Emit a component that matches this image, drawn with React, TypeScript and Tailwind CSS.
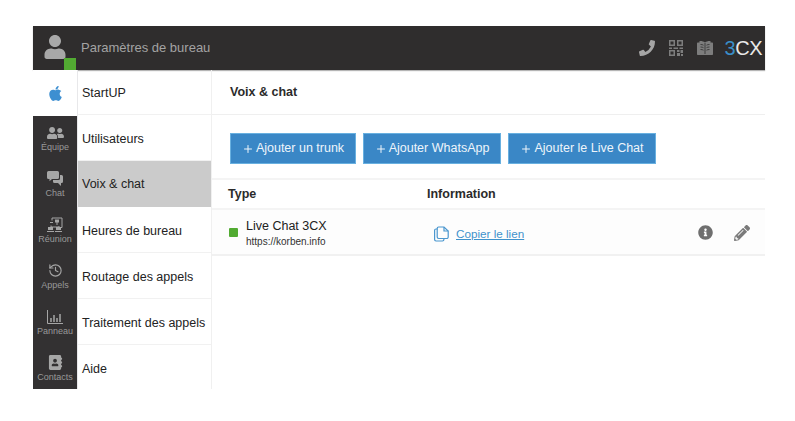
import { Plus, History } from 'lucide-react';
import { FaApple, FaUserFriends, FaAddressBook, FaPhoneAlt, FaInfoCircle, FaPencilAlt, FaUser } from 'react-icons/fa';
import type { ReactNode } from 'react';

function ChatIcon() {
  return (
    <svg viewBox="0 0 16 15" className="h-[15px] w-[16px]" fill="currentColor">
      <path d="M1.5 0h9A1.5 1.5 0 0 1 12 1.5v5A1.5 1.5 0 0 1 10.5 8H5l-2.5 2.2V8h-1A1.5 1.5 0 0 1 0 6.5v-5A1.5 1.5 0 0 1 1.5 0z" />
      <path d="M13 4h1.5A1.5 1.5 0 0 1 16 5.5v5a1.5 1.5 0 0 1-1.5 1.5H14v3l-3-3H7.500A1.500 1.500 0 0 1 6 10.500V9h5.500A1.500 1.500 0 0 0 13 7.500z" />
    </svg>
  );
}

function MeetingIcon() {
  return (
    <svg viewBox="0 0 16 16" className="h-[16px] w-[16px]" fill="none" stroke="currentColor" strokeWidth="1">
      <path d="M5 3.500V1h10v9.500h-2M3 5.500h3M10 5v3M4 8.500v1.500h8V9" />
      <rect x="8" y="2.500" width="4" height="3" fill="currentColor" stroke="none" />
      <rect x="1" y="10" width="5" height="3" fill="currentColor" stroke="none" />
      <rect x="9" y="10" width="5" height="3" fill="currentColor" stroke="none" />
      <path d="M0 14.500h7M8 14.500h7" />
    </svg>
  );
}

function PanelIcon() {
  return (
    <svg viewBox="0 0 16 14" className="h-[14px] w-[16px]" fill="none" stroke="currentColor">
      <path d="M.5 0v13.500H16" />
      <path d="M4 12V8M7 12V5M10 12V8M13 12V4" strokeWidth="1.500" />
    </svg>
  );
}

function QrIcon() {
  return (
    <svg viewBox="0 0 14 16" className="h-[16px] w-[14px]" fill="currentColor">
      <path d="M0 0h6v6H0zM1.500 1.500v3h3v-3zM8 0h6v6H8zM9.500 1.500v3h3v-3z" fillRule="evenodd" />
      <path d="M0 7.500h3V9H0zM4.500 7.500H9V9H4.500zM10.500 7.500H14V9h-3.500z" />
      <path d="M0 10h6v6H0zM1.500 11.500v3h3v-3z" fillRule="evenodd" />
      <path d="M8 10h2.500v2H8zM11.500 10H14v3h-2.500zM8 13h3v3H8zM12 14h2v2h-2z" />
    </svg>
  );
}

function BookIcon() {
  return (
    <svg viewBox="0 0 16 16" className="h-[16px] w-[16px]" fill="currentColor">
      <path d="M2.500 1C4.500.8 6.800 1.300 8 2.500 9.200 1.300 11.500.8 13.500 1v1.500H15c.6 0 1 .4 1 1V14c0 .6-.4 1-1 1H1c-.6 0-1-.4-1-1V3.500c0-.6.4-1 1-1h1.500z" />
      <path d="M8 3v11M3.500 4.500c1.200 0 2.300.2 3 .7M3.500 7c1.200 0 2.300.2 3 .7M3.500 9.500c1.200 0 2.300.2 3 .7M12.500 4.500c-1.200 0-2.300.2-3 .7M12.500 7c-1.200 0-2.300.2-3 .7M12.500 9.500c-1.200 0-2.300.2-3 .7" stroke="#2f2d2d" strokeWidth=".8" fill="none" />
    </svg>
  );
}

function CopyIcon() {
  return (
    <svg viewBox="0 0 15 16" className="h-[16px] w-[15px] text-[#4b97cf]" fill="none" stroke="currentColor" strokeWidth="1.200">
      <path d="M3.500 3H2a1.400 1.400 0 0 0-1.400 1.400v9.200A1.400 1.400 0 0 0 2 15h6.500a1.400 1.400 0 0 0 1.400-1.400V12.500" />
      <path d="M4.600 1H10l4.200 4v6.100a1.400 1.400 0 0 1-1.400 1.400H4.600a1.400 1.400 0 0 1-1.400-1.400V2.400A1.400 1.400 0 0 1 4.600 1z" />
      <path d="M10 1v4h4.200" />
    </svg>
  );
}

const rail: { label: string; icon: ReactNode }[] = [
  { label: 'Équipe', icon: <FaUserFriends className="h-[14px] w-[17px]" /> },
  { label: 'Chat', icon: <ChatIcon /> },
  { label: 'Réunion', icon: <MeetingIcon /> },
  { label: 'Appels', icon: <History className="h-[15px] w-[15px]" strokeWidth={1.8} /> },
  { label: 'Panneau', icon: <PanelIcon /> },
  { label: 'Contacts', icon: <FaAddressBook className="h-[15px] w-[15px]" /> },
];

const menu = [
  'StartUP',
  'Utilisateurs',
  'Voix & chat',
  'Heures de bureau',
  'Routage des appels',
  'Traitement des appels',
  'Aide',
];

const buttons = [
  { label: 'Ajouter un trunk', width: 'w-[126px]' },
  { label: 'Ajouter WhatsApp', width: 'w-[138px]' },
  { label: 'Ajouter le Live Chat', width: 'w-[148px]' },
];

export default function App() {
  return (
    <div className="h-[421px] w-[795px] overflow-hidden bg-white pl-[33px] pt-[26px] font-['Liberation_Sans',Arial,sans-serif]">
      <div className="flex h-[363px] w-[732px] flex-col">
        <header className="flex h-[44px] shrink-0 items-center bg-[#2f2d2d] shadow-[0_1px_1px_#b5b5b5]">
          <div className="relative flex h-[44px] w-[44px] items-center justify-center">
            <FaUser className="mb-[3px] h-[24px] w-[22px] text-[#a8a8a8]" />
            <span className="absolute bottom-0 right-[1px] h-[12px] w-[12px] bg-[#52ab32]" />
          </div>
          <span className="ml-[4px] text-[13px] text-[#a3a3a3]">Paramètres de bureau</span>
          <div className="ml-auto flex items-center pr-[3px]">
            <FaPhoneAlt className="h-[16px] w-[16px] -scale-x-100 text-[#a5a5a5]" />
            <span className="ml-[14px] text-[#7d7d7d]">
              <QrIcon />
            </span>
            <span className="ml-[14px] text-[#7d7d7d]">
              <BookIcon />
            </span>
            <span className="ml-[12px] text-[20px] leading-none tracking-[-0.5px] text-[#e8e8e8]">
              <span className="text-[#3a8fc9]">3</span>CX
            </span>
          </div>
        </header>

        <div className="flex min-h-0 flex-1">
          <nav className="w-[44px] shrink-0 overflow-hidden bg-[#333132]">
            <div className="flex h-[46px] items-center justify-center bg-white">
              <FaApple className="h-[17px] w-[17px] text-[#3d8fd1]" />
            </div>
            {rail.map((item) => (
              <div key={item.label} className="flex h-[46px] flex-col items-center justify-center pb-[2px] text-[#a6a6a6]">
                <span className="flex h-[16px] items-center">{item.icon}</span>
                <span className="mt-[1px] text-[9px] leading-[10px] text-[#999]">{item.label}</span>
              </div>
            ))}
          </nav>

          <aside className="w-[135px] shrink-0 overflow-hidden border-l border-r border-l-[#e8e8ea] border-r-[#f0f0f0]">
            {menu.map((item, i) => (
              <div
                key={item}
                className={
                  (i === 0 ? 'h-[45px] ' : 'h-[46px] ') +
                  (item === 'Voix & chat'
                    ? 'flex items-center bg-[#cbcbcb] pl-[4px] pt-[1px] text-[12.5px] text-[#222]'
                    : 'flex items-center border-b border-[#f1f1f1] pl-[4px] pt-[3px] text-[12.5px] text-[#222]')
                }
              >
                {item}
              </div>
            ))}
          </aside>

          <main className="min-w-0 flex-1">
            <div className="flex h-[45px] items-center border-b border-[#efefef] pl-[18px] text-[12.5px] font-bold text-[#2b2b2b]">
              Voix &amp; chat
            </div>
            <div className="flex gap-[7px] pl-[18px] pt-[18px]">
              {buttons.map((b) => (
                <button
                  key={b.label}
                  type="button"
                  className={`flex h-[31px] items-center justify-center gap-[2px] border border-[#68b0e0] bg-[#3a87c6] text-[12.5px] text-[#eef5fb] ${b.width}`}
                >
                  <Plus className="h-[12px] w-[12px]" strokeWidth={2} />
                  {b.label}
                </button>
              ))}
            </div>
            <div className="mt-[14px] flex h-[32px] items-center border-y-2 border-[#f4f4f4] pl-[16px] text-[12.5px] font-bold text-[#2b2b2b]">
              <span className="w-[199px]">Type</span>
              <span>Information</span>
            </div>
            <div className="flex h-[46px] items-center border-b-2 border-[#f1f1f1] bg-[#fdfdfd] pl-[17px]">
              <span className="h-[9px] w-[9px] rounded-[1px] bg-[#52ab32]" />
              <div className="ml-[8px] w-[188px] pt-[3px]">
                <div className="text-[12.5px] leading-[15px] text-[#222]">Live Chat 3CX</div>
                <div className="text-[10px] leading-[15px] text-[#333]">https://korben.info</div>
              </div>
              <span className="pt-[3px]">
                <CopyIcon />
              </span>
              <span className="ml-[7px] pt-[3px] text-[11.7px] text-[#3f92cc] underline">Copier le lien</span>
              <div className="ml-auto flex items-center pr-[15px] pt-[1px] text-[#6f6f6f]">
                <FaInfoCircle className="h-[15px] w-[15px]" />
                <FaPencilAlt className="ml-[21px] h-[16px] w-[16px] text-[#7a7a7a]" />
              </div>
            </div>
          </main>
        </div>
      </div>
    </div>
  );
}
